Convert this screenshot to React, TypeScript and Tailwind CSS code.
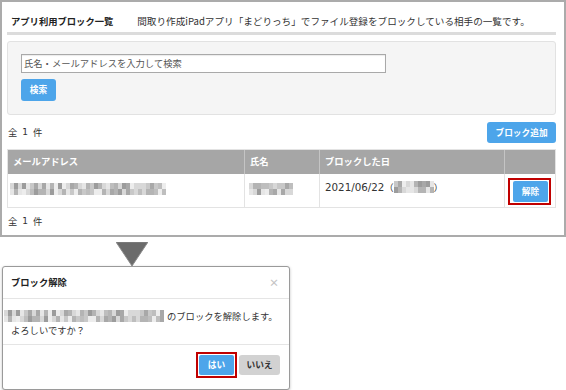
import React from "react";

const FONT = { fontFamily: '"Noto Sans CJK JP", "Noto Sans", sans-serif' };

const SHADES = ["#9c9c9c", "#b4b4b4", "#c8c8c8", "#d8d8d8", "#e6e6e6", "#a8a8a8", "#bebebe", "#ededed"];

// pixelated (blurred) personal info
function Mosaic({ width, seed, className = "" }: { width: number; seed: number; className?: string }) {
  const cols = Math.floor(width / 4);
  let s = seed;
  const rnd = () => {
    s = (s * 9301 + 49297) % 233280;
    return s / 233280;
  };
  const cells = Array.from({ length: cols }, () => [SHADES[Math.floor(rnd() * SHADES.length)], SHADES[Math.floor(rnd() * SHADES.length)]]);
  return (
    <span className={`inline-flex align-middle ${className}`}>
      {cells.map((c, i) => (
        <span key={i} className="flex flex-col w-[4px]">
          <span className="h-[6px]" style={{ background: c[0] }} />
          <span className="h-[6px]" style={{ background: c[1] }} />
        </span>
      ))}
    </span>
  );
}

function RedBox({ children, className = "" }: { children: React.ReactNode; className?: string }) {
  return <div className={`border-2 border-[#c00000] px-[1px] py-[1px] bg-white ${className}`}>{children}</div>;
}

function Count() {
  return (
    <span className="flex gap-[5px]">
      <span>全</span>
      <span className="font-['DejaVu_Sans'] text-[9px]">1</span>
      <span>件</span>
    </span>
  );
}

export default function App() {
  return (
    <div className="w-[566px] h-[390px] bg-white text-[#333] text-[9.3px] overflow-hidden" style={FONT}>
      {/* 一覧パネル */}
      <div className="w-[566px] h-[237px] border-2 border-[#ababab] pl-[5px] pr-[8px]">
        <div className="h-[30px] pt-[11px] pl-[4px] flex leading-[16px]">
          <span className="font-bold text-[#222]">アプリ利用ブロック一覧</span>
          <span className="ml-[24px] text-[9.6px]">間取り作成iPadアプリ「まどりっち」でファイル登録をブロックしている相手の一覧です。</span>
        </div>
        <div className="h-[3px] bg-[#dcdcdc]" />

        <div className="mt-[6px] h-[74px] border border-[#e2e2e2] bg-[#f5f5f5] rounded-[3px] pt-[12px] px-[13px]">
          <div className="w-[365px] h-[19px] border border-[#a9a9a9] bg-white flex items-center px-[2px] text-[#555] shadow-[inset_0_1px_1px_rgba(0,0,0,0.08)]">
            氏名・メールアドレスを入力して検索
          </div>
          <button className="mt-[6px] w-[35px] h-[22px] rounded-[3px] bg-[#4da5ea] text-white font-bold text-[8.7px]">検索</button>
        </div>

        <div className="mt-[7px] h-[21px] flex items-center justify-between">
          <span className="pl-[1px]"><Count /></span>
          <button className="w-[69px] h-[21px] rounded-[3px] bg-[#4da5ea] text-white font-bold text-[8.7px]">ブロック追加</button>
        </div>

        <div className="mt-[6px] border border-[#e3e3e3]">
          <div className="grid grid-cols-[237px_75px_185px_50px] h-[24px] bg-[#a6a6a6] text-white font-bold">
            <div className="pl-[5px] flex items-center border-r border-[#c4c4c4]">メールアドレス</div>
            <div className="pl-[5px] flex items-center border-r border-[#c4c4c4]">氏名</div>
            <div className="pl-[5px] flex items-center border-r border-[#c4c4c4]">ブロックした日</div>
            <div />
          </div>
          <div className="grid grid-cols-[237px_75px_185px_50px] h-[33px]">
            <div className="pl-[2px] pt-[8px] border-r border-[#e3e3e3]">
              <Mosaic width={156} seed={7} />
            </div>
            <div className="pl-[4px] pt-[8px] border-r border-[#e3e3e3]">
              <Mosaic width={44} seed={31} />
            </div>
            <div className="pl-[5px] pt-[5px] leading-[16px] border-r border-[#e3e3e3] flex items-start">
              <span className="font-['DejaVu_Sans'] text-[10.3px]">2021/06/22</span>
              <span>（</span>
              <Mosaic width={40} seed={53} className="mt-[2px]" />
              <span>）</span>
            </div>
            <div className="pl-[3px] pt-[4px]">
              <RedBox className="w-[43px]">
                <button className="w-[35px] h-[21px] ml-[2px] rounded-[2px] bg-[#4da5ea] text-white font-bold text-[8.7px]">解除</button>
              </RedBox>
            </div>
          </div>
        </div>

        <div className="mt-[5px] leading-[16px] pl-[1px]"><Count /></div>
      </div>

      {/* 矢印 */}
      <div className="ml-[116px] mt-[5px] h-[24px]">
        <svg width="32" height="24" viewBox="0 0 32 24">
          <polygon points="0,0 32,0 16,24" fill="#6b6b6b" stroke="#8a8a8a" strokeWidth="1" />
        </svg>
      </div>

      {/* 確認ダイアログ */}
      <div className="ml-[2px] w-[288px] h-[124px] border border-[#9a9a9a] rounded-[3px] bg-white shadow-[0_1px_3px_rgba(0,0,0,0.25)] flex flex-col">
        <div className="h-[32px] border-b border-[#e5e5e5] flex items-center justify-between pl-[8px] pr-[10px]">
          <span className="font-bold text-[#222]">ブロック解除</span>
          <span className="text-[#c4c4c4] font-bold text-[10px]">×</span>
        </div>
        <div className="h-[46px] border-b border-[#e5e5e5] pl-[8px] pt-[10px] leading-[14px]">
          <div className="flex items-center">
            <Mosaic width={160} seed={7} className="-ml-[7px]" />
            <span className="ml-[3px]">のブロックを解除します。</span>
          </div>
          <div>よろしいですか？</div>
        </div>
        <div className="flex justify-end items-start pt-[7px] pr-[9px] gap-[2px]">
          <RedBox>
            <button className="w-[35px] h-[20px] rounded-[2px] bg-[#4da5ea] text-white font-bold text-[8.7px]">はい</button>
          </RedBox>
          <button className="mt-[3px] w-[41px] h-[20px] rounded-[3px] bg-[#d2d2d2] text-[#333] font-bold text-[8.7px]">いいえ</button>
        </div>
      </div>
    </div>
  );
}
